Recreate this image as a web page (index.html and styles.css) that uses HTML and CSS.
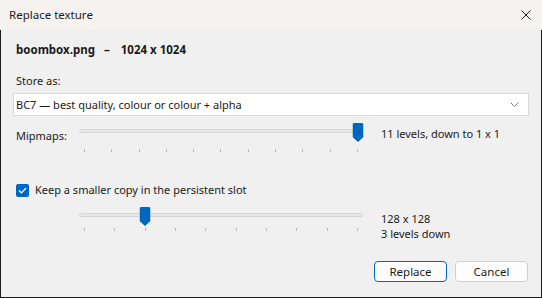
FILE: index.html
```html
<!DOCTYPE html>
<html>
<head>
    <title>Replace texture</title>
    <link rel="stylesheet" href="styles.css">
</head>
<body>
    <div class="window">
        <div class="titlebar">
            <span class="title">Replace texture</span>
            <svg class="close" width="10" height="10" viewBox="0 0 10 10">
                <path d="M0.5 0.5 L9.5 9.5 M9.5 0.5 L0.5 9.5" stroke="#1a1a1a" stroke-width="1" fill="none"/>
            </svg>
        </div>

        <div class="content">
            <div class="header">boombox.png<span class="dash">&ndash;</span>1024 x 1024</div>

            <div class="label store-label">Store as:</div>
            <div class="select">
                <span>BC7 &mdash; best quality, colour or colour + alpha</span>
                <svg class="chevron" width="9" height="5" viewBox="0 0 9 5">
                    <path d="M0.5 0.5 L4.5 4.5 L8.5 0.5" stroke="#7a7a7a" stroke-width="1" fill="none"/>
                </svg>
            </div>

            <div class="slider-row mip-row">
                <div class="row-label">Mipmaps:</div>
                <div class="slider">
                    <div class="track"></div>
                    <div class="thumbs">
                        <svg class="thumb" style="left: 100%" width="11" height="19" viewBox="0 0 11 19">
                            <path d="M0 1.5 Q0 0 1.5 0 H9.5 Q11 0 11 1.5 V14 L5.5 19 L0 14 Z" fill="#0067c0"/>
                        </svg>
                    </div>
                    <div class="ticks">
                        <i></i><i></i><i></i><i></i><i></i><i></i><i></i><i></i><i></i><i></i><i></i>
                    </div>
                </div>
                <div class="value">11 levels, down to 1 x 1</div>
            </div>

            <label class="check-row">
                <span class="checkbox">
                    <svg width="9" height="7" viewBox="0 0 9 7">
                        <path d="M1 3.5 L3.5 6 L8 1" stroke="#fff" stroke-width="1.2" fill="none"/>
                    </svg>
                </span>
                Keep a smaller copy in the persistent slot
            </label>

            <div class="slider-row copy-row">
                <div class="slider small">
                    <div class="track"></div>
                    <div class="thumbs">
                        <svg class="thumb" style="left: 22.22%" width="11" height="19" viewBox="0 0 11 19">
                            <path d="M0 1.5 Q0 0 1.5 0 H9.5 Q11 0 11 1.5 V14 L5.5 19 L0 14 Z" fill="#0067c0"/>
                        </svg>
                    </div>
                    <div class="ticks">
                        <i></i><i></i><i></i><i></i><i></i><i></i><i></i><i></i><i></i><i></i>
                    </div>
                </div>
                <div class="value">
                    <div>128 x 128</div>
                    <div>3 levels down</div>
                </div>
            </div>

            <div class="buttons">
                <button class="primary">Replace</button>
                <button>Cancel</button>
            </div>
        </div>
    </div>
</body>
</html>
```

FILE: styles.css
```css
body {
    margin: 0;
    font-family: "Noto Sans", "Open Sans", sans-serif;
    font-size: 11px;
    color: #1a1a1a;
    background: #f0f0f0;
}
.window {
    width: 542px;
    height: 298px;
    display: flex;
    flex-direction: column;
}

.titlebar {
    height: 30px;
    flex: none;
    display: flex;
    align-items: center;
    justify-content: space-between;
    padding: 0 11px 0 9px;
    background: #f5f2ef;
}
.title { line-height: 16px; font-size: 11.5px; }

.content {
    flex: 1;
    padding: 0 15px;
    background: #f0f0f0;
    border: 1px solid #1c1c1c;
    border-top: none;
    line-height: 16px;
}

.header {
    margin-top: 12px;
    font-weight: bold;
    font-size: 11.5px;
}
.header .dash { margin: 0 11px 0 9px; }

.store-label { margin-top: 15px; }

.select {
    margin: 4px -3px 0;
    height: 23px;
    box-sizing: border-box;
    padding: 0 9px 0 2px;
    display: flex;
    align-items: center;
    justify-content: space-between;
    background: #fff;
    border: 1px solid #d9d9d9;
}

.slider-row {
    display: flex;
    align-items: flex-start;
}
.mip-row { margin-top: 7px; }
.row-label { width: 63px; padding-top: 5px; }
.value { margin-left: 18px; padding-top: 3px; }

.slider {
    position: relative;
    width: 284px;
    padding-top: 6px;
}
.track {
    height: 4px;
    box-sizing: border-box;
    background: #e7e7e7;
    border: 1px solid #d6d6d6;
    border-radius: 2px;
}
.thumbs {
    position: absolute;
    top: 0;
    left: 5px;
    right: 5px;
}
.thumb {
    position: absolute;
    top: 0;
    transform: translateX(-50%);
}
.ticks {
    display: flex;
    justify-content: space-between;
    margin: 16px 5px 0;
}
.ticks i {
    width: 1px;
    height: 3px;
    background: #b9b9b9;
}
.slider.small .ticks { margin-top: 11px; }

.check-row {
    margin-top: 30px;
    display: flex;
    align-items: center;
    gap: 6px;
}
.checkbox {
    width: 13px;
    height: 13px;
    border-radius: 2px;
    background: #0067c0;
    display: flex;
    align-items: center;
    justify-content: center;
}

.copy-row {
    margin-top: 9px;
    padding-left: 63px;
}
.copy-row .value { padding-top: 4px; line-height: 15px; }

.buttons {
    margin: 20px -2px 0 0;
    display: flex;
    justify-content: flex-end;
    gap: 8px;
}
button {
    width: 73px;
    height: 21px;
    padding: 0;
    font-family: inherit;
    font-size: 11.5px;
    color: #1a1a1a;
    background: #fdfdfd;
    border: 1px solid #d0d0d0;
    border-radius: 4px;
}
button.primary { border-color: #0067c0; }
```
